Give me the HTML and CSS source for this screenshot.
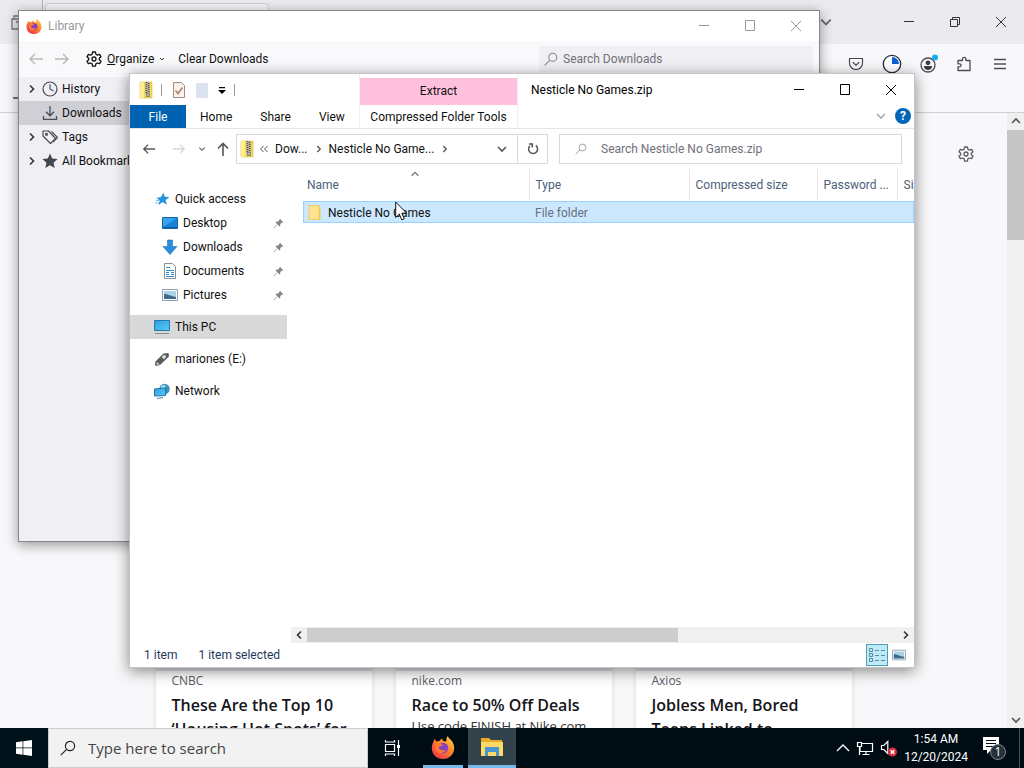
FILE: index.html
```html
<!DOCTYPE html>
<html lang="en">
<head>
<meta charset="utf-8">
<title>Nesticle No Games.zip</title>
<link rel="stylesheet" href="styles.css">
</head>
<body>
<svg class="defs" aria-hidden="true">
  <defs>
    <linearGradient id="fire" x1="1" y1="0" x2="0.2" y2="1"><stop offset="0" stop-color="#ffe14a"/><stop offset="0.45" stop-color="#ff8a2a"/><stop offset="1" stop-color="#f0304f"/></linearGradient>
    <linearGradient id="screen" x1="0" y1="0" x2="1" y2="1"><stop offset="0" stop-color="#2f9be0"/><stop offset="1" stop-color="#54cdf5"/></linearGradient>
  </defs>
  <symbol id="firefox" viewBox="0 0 24 24">
    <path fill="url(#fire)" d="M3.500 4c1 1 1.500 1.700 1.800 2.600C6.300 6 7.500 5.800 8.500 6c1-1.500 2-2.300 3-2.500-.4 1 0 2 1 2.600 1 .4 2 .4 3-.1-.6-1.800.1-3.900 1.500-5 0 3 5.800 4.200 6.200 11.200C23.500 19 18.500 24 12 24S.8 19.500.8 13C.8 9 2.500 7.500 3.500 4z"/>
    <circle cx="12" cy="13" r="5.200" fill="#8440c7"/>
    <path fill="#ff7a30" d="M5 8.500c3-1 6 .2 7.500 2-2.500-.2-3.500 1.500-5 1.500 1 3.500 5 4.500 8 2.500-1.500 4-8 5-10.500 1C3.800 13.500 4 10.500 5 8.500z"/>
  </symbol>
  <symbol id="search" viewBox="0 0 16 16"><g fill="none" stroke="currentColor" stroke-width="1.200"><circle cx="10" cy="6" r="4.600"/><path d="M6.600 9.400.8 15.200"/></g></symbol>
  <symbol id="min" viewBox="0 0 12 12"><path stroke="currentColor" d="M1 5.500h10"/></symbol>
  <symbol id="max" viewBox="0 0 12 12"><path fill="none" stroke="currentColor" d="M1.500 .5h9v10h-9z"/></symbol>
  <symbol id="restore" viewBox="0 0 12 12"><path fill="none" stroke="currentColor" d="M1.500 3.500h7v7h-7zM3.500 3.500v-2h7v7h-2"/></symbol>
  <symbol id="close" viewBox="0 0 12 12"><path fill="none" stroke="currentColor" d="m1 1 10 10M11 1 1 11"/></symbol>
  <symbol id="down" viewBox="0 0 12 12"><path fill="none" stroke="currentColor" stroke-width="1.600" d="m2 4 4 4 4-4"/></symbol>
  <symbol id="up" viewBox="0 0 12 12"><path fill="none" stroke="currentColor" stroke-width="1.600" d="m2 8 4-4 4 4"/></symbol>
  <symbol id="right" viewBox="0 0 12 12"><path fill="none" stroke="currentColor" stroke-width="1.600" d="m4 2.500 3.500 3.500L4 9.500"/></symbol>
  <symbol id="left" viewBox="0 0 12 12"><path fill="none" stroke="currentColor" stroke-width="1.600" d="M8 2.500 4.500 6 8 9.500"/></symbol>
  <symbol id="back" viewBox="0 0 16 16"><path fill="none" stroke="currentColor" stroke-width="1.500" d="M15 8H2M7 3 2 8l5 5"/></symbol>
  <symbol id="forward" viewBox="0 0 16 16"><path fill="none" stroke="currentColor" stroke-width="1.500" d="M1 8h13M9 3l5 5-5 5"/></symbol>
  <symbol id="upward" viewBox="0 0 16 16"><path fill="none" stroke="currentColor" stroke-width="1.600" d="M8 15V2.500M3 7.500l5-5 5 5"/></symbol>
  <symbol id="gear" viewBox="0 0 16 16"><g fill="none" stroke="currentColor" stroke-width="1.300" stroke-linejoin="round"><path d="m6.600 1-.5 2.200-1.500.9-2.200-.7L1 5.800l1.700 1.500v1.500L1 10.300l1.400 2.400 2.200-.7 1.500.9.500 2.200h2.800l.5-2.200 1.500-.9 2.200.7 1.400-2.400-1.700-1.500V7.300L15 5.800l-1.400-2.400-2.200.7-1.500-.9L9.400 1z"/><circle cx="8" cy="8" r="2"/></g></symbol>
  <symbol id="zip" viewBox="0 0 16 18"><path fill="#f3d94e" stroke="#d8b93a" stroke-width=".6" d="M2 1h12v16H2z"/><path fill="#ffee8f" d="M2 1h4v16H2z"/><path fill="#c4b68e" d="M7 1h5v12H7z"/><path stroke="#555" stroke-width="1.500" stroke-dasharray="1 1" d="M8.500 1v11M10.700 2v10"/><path fill="#888" d="M8 12h4v4H8z"/><path fill="#ddd" d="M9.500 13h1v2h-1z"/></symbol>
  <symbol id="pin" viewBox="0 0 12 12"><path fill="#808489" d="m7.500.8 3.700 3.700-1 .6-.6-.1-1.800 1.800c.3 1 .2 1.900-.5 2.600L5 7.100 1.600 10.700l-.9.500.5-1L4.800 6.700 2.600 4.600c.8-.7 1.700-.8 2.700-.5l1.800-1.800-.1-.7z"/></symbol>
  <symbol id="picture" viewBox="0 0 16 12"><path fill="#fff" stroke="#8aa0ae" d="M.5.500h15v11H.5z"/><path fill="#a9d2e8" d="M2 2h12v8H2z"/><path fill="#416a86" d="M2 5c4 0 6 2 12 3v2H2z"/></symbol>
</svg>

<div class="desktop">
  <main class="browser">
    <div class="tabstrip">
      <div class="tab-well"><svg class="i16" viewBox="0 0 16 16"><path fill="none" stroke="#77777f" stroke-width="1.300" d="M2 5h13v10H2zM4 5V2h9M6 8h7"/></svg></div>
      <div class="tab"></div>
      <div class="window-buttons">
        <button class="tabs-menu" aria-label="List all tabs"><svg class="i14"><use href="#down"/></svg></button>
        <button aria-label="Minimize"><svg class="i12"><use href="#min"/></svg></button>
        <button aria-label="Restore"><svg class="i12"><use href="#restore"/></svg></button>
        <button aria-label="Close"><svg class="i12"><use href="#close"/></svg></button>
      </div>
    </div>
    <div class="browser-tools">
      <button class="add" aria-label="Add"><svg class="i12" viewBox="0 0 12 12"><path stroke="#4b4b55" stroke-width="1.300" d="M6 0v12M0 6h12"/></svg></button>
      <button aria-label="Pocket"><svg class="i16" viewBox="0 0 16 16"><path fill="none" stroke="#4b4b55" stroke-width="1.200" d="M1.500 2.500h13V7c0 4-3 6.500-6.500 6.500S1.500 11 1.500 7zM4.800 6.200 8 9.200l3.200-3"/></svg></button>
      <button aria-label="Download progress"><svg class="i20" viewBox="0 0 20 20"><circle cx="10" cy="10" r="8.700" fill="#fff" stroke="#222b3a" stroke-width="1.300"/><path fill="#0a62d0" d="M10 10V3a7 7 0 0 1 7 7z"/></svg></button>
      <button aria-label="Account"><svg class="i20" viewBox="0 0 20 20"><circle cx="10" cy="11" r="7" fill="none" stroke="#4b4b55" stroke-width="1.300"/><circle cx="10" cy="8.800" r="2.400" fill="#3c3c46"/><path fill="#3c3c46" d="M5.800 12h8.400c-.3 2.500-2 4-4.200 4s-3.900-1.500-4.200-4z"/><circle cx="17" cy="3.500" r="3" fill="#18b0f0"/></svg></button>
      <button aria-label="Extensions"><svg class="i16" viewBox="0 0 16 16"><path fill="none" stroke="#4b4b55" stroke-width="1.300" stroke-linejoin="round" d="M2 4.500h4.500V3a1.700 1.700 0 0 1 3.400 0v1.500H14v10H2v-3.700h1.600a1.500 1.500 0 0 0 0-3H2z"/></svg></button>
      <button aria-label="Menu"><svg class="i16" viewBox="0 0 16 16"><path stroke="#4b4b55" stroke-width="1.300" d="M2 3.500h12M2 8h12M2 12.500h12"/></svg></button>
    </div>
    <div class="page">
      <div class="feed">
        <button class="settings" aria-label="Personalize"><svg class="i16"><use href="#gear"/></svg></button>
        <div class="cards">
          <article class="card"><div class="thumb"></div><p class="source">CNBC</p><h3>These Are the Top 10 ‘Housing Hot Spots’ for</h3></article>
          <article class="card"><div class="thumb"></div><p class="source">nike.com</p><h3>Race to 50% Off Deals</h3><p class="blurb">Use code FINISH at Nike.com</p></article>
          <article class="card"><div class="thumb"></div><p class="source">Axios</p><h3>Jobless Men, Bored Teens Linked to</h3></article>
        </div>
      </div>
      <div class="vscroll"><svg class="i12"><use href="#up"/></svg><div class="vthumb"></div><svg class="i12 end"><use href="#down"/></svg></div>
    </div>
  </main>

  <section class="window library">
    <header class="lib-title">
      <svg class="i16"><use href="#firefox"/></svg><span>Library</span>
      <div class="window-buttons">
        <button aria-label="Minimize"><svg class="i12"><use href="#min"/></svg></button>
        <button aria-label="Maximize"><svg class="i12"><use href="#max"/></svg></button>
        <button aria-label="Close"><svg class="i12"><use href="#close"/></svg></button>
      </div>
    </header>
    <div class="lib-tools">
      <button class="dim" aria-label="Back"><svg class="i16"><use href="#back"/></svg></button>
      <button class="dim" aria-label="Forward"><svg class="i16"><use href="#forward"/></svg></button>
      <button class="organize"><svg class="i16"><use href="#gear"/></svg><span><u>O</u>rganize</span><svg class="i6"><use href="#down"/></svg></button>
      <button>Clear Downloads</button>
      <label class="lib-search"><svg class="i14"><use href="#search"/></svg><input type="text" placeholder="Search Downloads" aria-label="Search Downloads"></label>
    </div>
    <nav class="lib-side">
      <a href="#"><svg class="i12"><use href="#right"/></svg><svg class="i16" viewBox="0 0 16 16"><g fill="none" stroke="#4b4b55" stroke-width="1.200"><circle cx="8" cy="8" r="7"/><path d="M8 3.500V8l3.500 2"/></g></svg>History</a>
      <a href="#" class="selected"><span class="i12"></span><svg class="i16" viewBox="0 0 16 16"><path fill="none" stroke="#4b4b55" stroke-width="1.300" d="M8 1v9.500M4 6.800l4 4 4-4M1.500 11v3.300h13V11"/></svg>Downloads</a>
      <a href="#"><svg class="i12"><use href="#right"/></svg><svg class="i16" viewBox="0 0 16 16"><g fill="none" stroke="#4b4b55" stroke-width="1.200" stroke-linejoin="round"><path d="M1 2v5l7.500 7.500 5-5L6.500 2z"/><path d="m9.500 2.500 6 6-4.500 4.500"/><circle cx="4.500" cy="5.300" r="1"/></g></svg>Tags</a>
      <a href="#"><svg class="i12"><use href="#right"/></svg><svg class="i16" viewBox="0 0 16 16"><path fill="#45454d" d="m8 .6 2.200 5 5.400.5-4.100 3.600 1.200 5.400L8 12.300l-4.700 2.800 1.200-5.400L.4 6.100l5.400-.5z"/></svg>All Bookmarks</a>
    </nav>
  </section>

  <section class="window explorer">
    <header class="ribbon">
      <div class="ribbon-main">
        <div class="quick">
          <svg class="zip"><use href="#zip"/></svg><i class="sep"></i>
          <button aria-label="Properties"><svg class="i16" viewBox="0 0 16 16"><path fill="#fdf1e8" stroke="#9b8c84" d="M2.500.5h8l3 3v12h-11z"/><path fill="none" stroke="#a08470" stroke-width="1.500" d="m4.500 8.500 2.500 3 4.500-6"/></svg></button>
          <button aria-label="New folder"><svg class="i16" viewBox="0 0 16 16"><path fill="#dce3ef" d="M2 1h12v15H2z"/></svg></button>
          <button aria-label="Customize"><svg class="i10" viewBox="0 0 10 10"><path d="M2 2h6v1.200H2zM1 5h8L5 9z"/></svg></button><i class="sep"></i>
        </div>
        <nav class="tabs"><button class="file">File</button><button>Home</button><button>Share</button><button>View</button></nav>
      </div>
      <div class="ribbon-context"><div class="extract">Extract</div><button>Compressed Folder Tools</button></div>
      <div class="ribbon-rest">
        <div class="title-row"><span>Nesticle No Games.zip</span>
          <div class="window-buttons">
            <button aria-label="Minimize"><svg class="i12"><use href="#min"/></svg></button>
            <button aria-label="Maximize"><svg class="i12"><use href="#max"/></svg></button>
            <button aria-label="Close"><svg class="i12"><use href="#close"/></svg></button>
          </div>
        </div>
        <div class="help-row"><svg class="i12"><use href="#down"/></svg><button class="help" aria-label="Help">?</button></div>
      </div>
    </header>
    <div class="address-row">
      <button aria-label="Back"><svg class="i14"><use href="#back"/></svg></button>
      <button class="faint" aria-label="Forward"><svg class="i14"><use href="#forward"/></svg></button>
      <button class="recent" aria-label="Recent locations"><svg class="i8"><use href="#down"/></svg></button>
      <button class="up" aria-label="Up"><svg class="i16"><use href="#upward"/></svg></button>
      <div class="address">
        <svg class="zip"><use href="#zip"/></svg>
        <svg class="i10 chevrons" viewBox="0 0 10 10"><path fill="none" stroke="#555" d="M4.500 2 1.500 5l3 3M8.500 2l-3 3 3 3"/></svg>
        <button class="crumb">Dow...</button><svg class="i10"><use href="#right"/></svg>
        <button class="crumb">Nesticle No Game...</button><svg class="i10"><use href="#right"/></svg>
        <button class="drop" aria-label="Previous locations"><svg class="i12"><use href="#down"/></svg></button>
        <button class="refresh" aria-label="Refresh"><svg class="i14" viewBox="0 0 14 14"><path fill="none" stroke="#555" stroke-width="1.500" d="M9.800 3.400A4.500 4.500 0 1 1 4 3.700M3 2h3.300v3.500"/></svg></button>
      </div>
      <label class="search-box"><svg class="i12"><use href="#search"/></svg><input type="text" placeholder="Search Nesticle No Games.zip" aria-label="Search Nesticle No Games.zip"></label>
    </div>
    <div class="explorer-body">
      <nav class="tree">
        <div class="group">
          <a href="#" class="top"><svg class="i16" viewBox="0 0 16 16"><path fill="#2292e0" d="m9.500 1.800 1.200 4 4.800.2-3.900 2.900 1.200 4.800-4.100-2.700L4.500 14l1.200-4.400L2.500 6.800l4.300-.5z"/><path stroke="#79c3f2" d="M2 9.500h3M1 12h4"/></svg>Quick access</a>
          <a href="#"><svg class="i16" viewBox="0 0 16 16"><path fill="#1683d8" stroke="#1566a8" d="M.5 2.500h15v11H.5z"/><path fill="#35a5f0" d="M1 3h14L1 12z"/><path stroke="#0d5c9c" d="M1 12.500h14"/></svg>Desktop<svg class="pin"><use href="#pin"/></svg></a>
          <a href="#"><svg class="i16" viewBox="0 0 16 16"><path fill="#2b8ddb" stroke="#1d76bd" stroke-width=".6" d="M5.500 1h5v6.500H15L8 15.500 1 7.500h4.500z"/></svg>Downloads<svg class="pin"><use href="#pin"/></svg></a>
          <a href="#"><svg class="i16" viewBox="0 0 16 16"><path fill="#fff" stroke="#8a8f94" d="M2.500.5h8l3 3v12h-11z"/><path stroke="#2f8ccc" d="M4 4.500h4M4 7.500h8M4 9.500h3M9 9.500h3M4 11.500h3M9 11.500h3M4 13.500h8"/></svg>Documents<svg class="pin"><use href="#pin"/></svg></a>
          <a href="#"><svg class="i16"><use href="#picture"/></svg>Pictures<svg class="pin"><use href="#pin"/></svg></a>
        </div>
        <a href="#" class="top selected"><svg class="i16" viewBox="0 0 16 16"><path fill="url(#screen)" stroke="#2577ad" d="M.5 1.500h15v10H.5z"/><path stroke="#7e8b94" d="M1 14.500h14"/></svg>This PC</a>
        <a href="#" class="top"><svg class="i16" viewBox="0 0 16 16"><path fill="#5a5a5a" d="M1.500 10.500 9.500 2.500l5-.5.5 3.500-9 8.500-4 1-1-1z"/><path fill="#ddd" d="m9.500 4 2.500.5-.3 2.200-2 1.500-2-2z"/><path fill="#aaa" d="m3 10.500 3 3-2 1-2-1z"/></svg>mariones (E:)</a>
        <a href="#" class="top"><svg class="i16" viewBox="0 0 16 16"><circle cx="10.500" cy="6" r="5.200" fill="#3a8fbd"/><path fill="#9bd8f2" d="M7 3c2-1.500 4-1 5 0l-2 3-3 1z"/><path fill="url(#screen)" stroke="#1f75ad" d="m.5 6 11-1v7.500L.5 13z"/><path stroke="#547f99" d="m3 15.500 6-1"/></svg>Network</a>
      </nav>
      <div class="files">
        <table>
          <colgroup><col class="c-name"><col class="c-type"><col class="c-size"><col class="c-pass"><col></colgroup>
          <thead><tr><th><svg class="sort"><use href="#up"/></svg>Name</th><th>Type</th><th>Compressed size</th><th>Password ...</th><th>Size</th></tr></thead>
          <tbody><tr><td class="name"><div><svg class="i16" viewBox="0 0 16 16"><path fill="#f0cd60" d="M1.500 0h11l1 1.500V15h-12z"/><path fill="#ffe390" d="M2.500 1h9v13h-9z"/></svg>Nesticle No Games</div></td><td>File folder</td><td></td><td></td><td></td></tr></tbody>
        </table>
        <div class="hscroll"><svg class="i12"><use href="#left"/></svg><div class="hthumb"></div><svg class="i12 end"><use href="#right"/></svg></div>
      </div>
    </div>
    <footer class="status"><span>1 item</span><span>1 item selected</span>
      <button class="view active" aria-label="Details view"><svg class="i16" viewBox="0 0 16 16"><g fill="none" stroke="#5c8c9e"><path d="M.5 1.500h3v3h-3zM.5 6.500h3v3h-3zM.5 11.500h3v3h-3z"/><path d="M6 3.500h4M6 8.500h4M6 13.500h4M12 3.500h4M12 8.500h4M12 13.500h4"/></g></svg></button>
      <button class="view" aria-label="Large icons view"><svg class="i14"><use href="#picture"/></svg></button>
    </footer>
  </section>
  <svg class="cursor" viewBox="0 0 13 20"><path fill="#fff" stroke="#111" d="M.7 1v15.500l3.600-3.400 2.500 5.700 2.500-1-2.500-5.600h4.800z"/></svg>
</div>

<footer class="taskbar">
  <button class="start" aria-label="Start"><svg class="i16" viewBox="0 0 16 16"><path fill="#fff" d="m0 2.200 6.600-.9v6.300H0zM7.300 1.200 16 0v7.600H7.300zM0 8.300h6.600v6.400L0 13.800zM7.300 8.300H16V16l-8.700-1.200z"/></svg></button>
  <label class="task-search"><svg class="i16"><use href="#search"/></svg><input type="text" placeholder="Type here to search" aria-label="Type here to search"></label>
  <button class="task" aria-label="Task view"><svg class="i18" viewBox="0 0 18 18"><path fill="none" stroke="#fff" stroke-width="1.200" d="M2.500 5.500h9v7h-9zM2.500 1v2h9V1M2.500 17v-2h9v2M15.500 1v16"/><path fill="#fff" d="M14 6h3v3h-3z"/></svg></button>
  <button class="task open" aria-label="Firefox"><svg class="i24"><use href="#firefox"/></svg></button>
  <button class="task open current" aria-label="File Explorer"><svg class="i24" viewBox="0 0 24 24"><path fill="#e9a92c" d="M1 3h8l2 2h11v16H1z"/><path fill="#ffd965" d="M1 7h22v14H1z"/><path fill="#4794cf" d="M5 12h14v9h-3v-4H8v4H5z"/></svg></button>
  <div class="tray">
    <svg class="i14" viewBox="0 0 14 14"><path fill="none" stroke="#fff" stroke-width="1.300" d="m1 10 6-6 6 6"/></svg>
    <svg class="i18" viewBox="0 0 18 18"><path fill="none" stroke="#fff" stroke-width="1.200" d="M6 4.500h10.500v8H4V8M10 12.500v3M6.500 15.500h7M1.500 3.500h4v4h-4zM3.500 7.500V16"/></svg>
    <svg class="i18" viewBox="0 0 18 18"><path fill="none" stroke="#fff" stroke-width="1.200" d="M1.500 6.500h2.300l4-4v12l-4-4H1.500z"/><circle cx="12.500" cy="13" r="4.500" fill="#d92c3a"/><path stroke="#fff" stroke-width="1.500" d="m10.700 11.200 3.600 3.600m0-3.600-3.600 3.600"/></svg>
    <time>1:54 AM<br>12/20/2024</time>
    <svg class="notice" viewBox="0 0 26 26"><path fill="#fff" d="M2 2h16v13h-8l-4 4v-4H2z"/><path stroke="#000c14" d="M5 5.500h10M5 8.500h10M5 11.500h7"/><circle cx="17" cy="17" r="7.500" fill="#25323a" stroke="#7d878d"/><text x="17" y="21" text-anchor="middle">1</text></svg>
    <i class="peek"></i>
  </div>
</footer>
</body>
</html>
```
FILE: styles.css
```css
* { box-sizing: border-box; }
body { margin: 0; height: 100vh; display: flex; flex-direction: column; overflow: hidden; font: 12px/16px Roboto, "Open Sans", sans-serif; color: #111; }
button, input { font: inherit; color: inherit; border: 0; background: none; padding: 0; margin: 0; }
button { display: inline-flex; align-items: center; justify-content: center; white-space: nowrap; }
input { min-width: 0; flex: 1; outline: 0; }
a { color: inherit; text-decoration: none; }
p, h3 { margin: 0; }
svg { flex: none; display: block; }
.defs { position: absolute; width: 0; height: 0; }
.i6 { width: 6px; height: 6px; }
.i8 { width: 8px; height: 8px; }
.i10 { width: 10px; height: 10px; }
.i12 { width: 12px; height: 12px; flex: none; }
.i14 { width: 14px; height: 14px; }
.i16 { width: 16px; height: 16px; }
.i18 { width: 18px; height: 18px; }
.i20 { width: 20px; height: 20px; }
.i24 { width: 24px; height: 24px; }
.zip { width: 16px; height: 18px; }
.window-buttons { display: flex; margin-left: auto; align-self: stretch; }
.window-buttons button { width: 46px; }

.desktop { position: relative; flex: 1; min-height: 0; overflow: hidden; }
.browser { height: 100%; display: flex; flex-direction: column; background: #f8f8fa; }
.tabstrip { height: 44px; display: flex; background: #ebebef; color: #333; }
.tab-well { width: 43px; padding: 14px 10px; border-right: 1px solid #b5b5bb; }
.tab { width: 224px; margin: 3px 2px; border-radius: 4px; background: #f2f2f4; border: 1px solid #cfcfd3; }
.tabs-menu { color: #666; }
.window-buttons .tabs-menu { width: 30px; margin-right: 45px; }
.browser-tools { height: 69px; padding: 10px 14px 0; display: flex; justify-content: flex-end; align-items: flex-start; gap: 16px; border-bottom: 1px solid #d0d0d4; }
.browser-tools button { width: 20px; height: 20px; }
.browser-tools .add { align-self: flex-end; width: 12px; margin: 0 auto 4px -1px; }
.page { flex: 1; min-height: 0; display: flex; }
.feed { flex: 1; display: flex; flex-direction: column; padding-top: 33px; overflow: hidden; }
.settings { align-self: flex-end; width: 17px; height: 17px; margin-right: 33px; color: #5b5b66; }
.cards { margin-top: 338px; display: grid; grid-template-columns: repeat(3, 216px); gap: 24px; justify-content: center; }
.card { height: 330px; padding: 0 16px; background: #fff; border-radius: 8px; box-shadow: 0 2px 6px #3a394422; font-family: "Open Sans", sans-serif; }
.thumb { height: 171px; margin: 0 -16px; background: #e0e0e6; border-radius: 8px 8px 0 0; }
.source { font-size: 12px; line-height: 20px; color: #5b5b66; }
.card h3 { margin-top: 2px; font-size: 16px; line-height: 24px; font-weight: 600; color: #15141a; }
.blurb { font-size: 13px; line-height: 18px; white-space: nowrap; color: #333; }
.vscroll { width: 17px; padding: 2px 0; display: flex; flex-direction: column; align-items: center; background: #f0f0f0; color: #555; }
.vthumb { width: 17px; height: 110px; margin-top: 3px; background: #c6c6c6; }
.end { margin-top: auto; }

.window { position: absolute; display: flex; flex-direction: column; }
.library { left: 18px; top: 10px; right: 204px; bottom: 186px; background: #fff; border: 1px solid #85858a; box-shadow: 0 3px 12px #0006; }
.lib-title { height: 30px; display: flex; align-items: center; gap: 6px; padding-left: 7px; color: #999; }
.lib-tools { height: 36px; display: flex; align-items: center; padding: 0 6px 0 9px; background: #f9f9fb; }
.dim { width: 16px; margin-right: 10px; color: #bbb; }
.organize { gap: 5px; margin: 0 13px 0 6px; }
.lib-search { margin-left: auto; width: 274px; height: 26px; display: flex; align-items: center; gap: 5px; padding: 0 5px; background: #f0f0f4; color: #888; }
input::placeholder { color: #707078; opacity: 1; }
.lib-side { flex: 1; background: #efeff4; }
.lib-side a { height: 24px; display: flex; align-items: center; gap: 4px; padding-left: 7px; }
.lib-side a .i12 { color: #333; }
.lib-side .selected { background: #cfcfd5; }

.explorer { left: 129px; top: 73px; right: 109px; bottom: 60px; background: #fff; border: 1px solid #c4c4c8; box-shadow: 0 3px 14px #0007; }
.ribbon { height: 55px; display: flex; border-bottom: 1px solid #e4e4e6; }
.ribbon-main { width: 229px; display: flex; flex-direction: column; }
.quick { height: 31px; display: flex; align-items: center; padding-left: 8px; gap: 7px; }
.quick .sep + button { margin-left: 2px; }
.sep { width: 1px; height: 12px; background: #999; }
.tabs { flex: 1; display: flex; }
.tabs button { padding: 0 14px; }
.tabs .file { width: 56px; flex: none; background: #0063b1; color: #fff; }
.ribbon-context { width: 159px; padding-top: 4px; border: solid #eee; border-width: 0 1px; display: flex; flex-direction: column; }
.extract { height: 27px; line-height: 27px; text-align: center; background: #ffc0dd; }
.ribbon-context button { flex: 1; }
.ribbon-rest { flex: 1; }
.title-row { height: 31px; display: flex; align-items: center; padding-left: 13px; color: #000; }
.help-row { display: flex; justify-content: flex-end; align-items: center; gap: 8px; padding: 3px 3px 0; color: #aaa; }
.help { width: 16px; height: 16px; border-radius: 50%; background: #0067b8; color: #fff; font-weight: 700; }
.address-row { height: 40px; padding: 0 12px; display: flex; align-items: center; color: #555; }
.address-row > button { width: 14px; margin-right: 16px; }
.address-row .faint { color: #d8d8d8; margin-right: 12px; }
.address-row .recent { width: 8px; margin-right: 9px; }
.address-row .up { width: 16px; margin-right: 5px; }
.address { width: 312px; height: 30px; display: flex; align-items: center; border: 1px solid #d9d9d9; padding-left: 2px; }
.chevrons { margin: 0 6px 0 4px; }
.crumb { color: #111; margin-right: 6px; }
.crumb + svg { margin-right: 5px; }
.drop { margin-left: auto; width: 30px; align-self: stretch; }
.refresh { width: 30px; align-self: stretch; border-left: 1px solid #d9d9d9; }
.search-box { flex: 1; height: 30px; margin-left: 11px; border: 1px solid #d9d9d9; display: flex; align-items: center; gap: 14px; padding-left: 15px; color: #999; }
.explorer-body { flex: 1; min-height: 0; display: flex; }
.tree { width: 157px; padding-top: 18px; display: flex; flex-direction: column; gap: 8px; }
.tree a { height: 24px; display: flex; align-items: center; gap: 5px; padding: 0 3px 0 32px; }
.tree .top { padding-left: 24px; }
.tree .selected { background: #d9d9d9; }
.pin { width: 11px; height: 11px; margin-left: auto; }
.files { flex: 1; min-width: 0; padding-left: 4px; display: flex; flex-direction: column; }
table { table-layout: fixed; width: calc(100% - 12px); margin-left: 12px; border-collapse: collapse; }
.c-name { width: 226px; }
.c-type { width: 160px; }
.c-size { width: 128px; }
.c-pass { width: 80px; }
th, td { padding: 0 0 0 6px; font-weight: 400; text-align: left; white-space: nowrap; overflow: hidden; color: #68707c; }
th { position: relative; height: 32px; border-right: 1px solid #e5e5e5; border-bottom: 2px solid #fff; color: #4c607a; }
th:first-child { padding-left: 4px; }
th:last-child { border-right: 0; }
.sort { position: absolute; left: 107px; top: 0; width: 10px; height: 10px; color: #777; }
tbody tr { height: 22px; background: #cce8ff; outline: 1px solid #99d1ff; outline-offset: -1px; }
td.name { padding-left: 4px; color: #111; }
.name div { display: flex; align-items: center; gap: 5px; }
.hscroll { height: 16px; margin-top: auto; display: flex; align-items: center; padding: 0 2px; background: #f0f0f0; color: #333; }
.hthumb { width: 60%; height: 14px; margin-left: 2px; background: #cdcdcd; }
.hscroll .end { margin: 0 0 0 auto; }
.status { height: 24px; display: flex; align-items: center; padding: 0 4px 0 14px; color: #1e395b; }
.status span { margin-right: 21px; }
.view { width: 22px; height: 22px; }
.view.active { margin-left: auto; background: #bdeaf7; border: 1px solid #4c9db5; }
.cursor { position: absolute; left: 395px; top: 201px; width: 13px; height: 20px; }

.taskbar { height: 40px; display: flex; background: #000c14; color: #fff; }
.start { width: 48px; background: #001219; }
.task-search { width: 320px; display: flex; align-items: center; gap: 12px; padding-left: 11px; background: #f2f2f2; border: 1px solid #ccc; color: #222; font: 15px/20px "Open Sans", sans-serif; }
.task-search input::placeholder { color: #444; }
.task { width: 48px; }
.task.open { width: 40px; margin-left: 7px; border-bottom: 3px solid #76b9ed; }
.task.current { width: 48px; margin-left: 5px; background: #32434c; }
.tray { margin-left: auto; display: flex; align-items: center; gap: 6px; }
time { text-align: center; line-height: 18px; margin: 0 7px 0 0; }
.notice { width: 26px; height: 26px; }
.notice text { fill: #fff; font: 12px "Open Sans", sans-serif; }
.peek { width: 1px; height: 40px; background: #46525a; margin: 0 4px 0 6px; }
```
